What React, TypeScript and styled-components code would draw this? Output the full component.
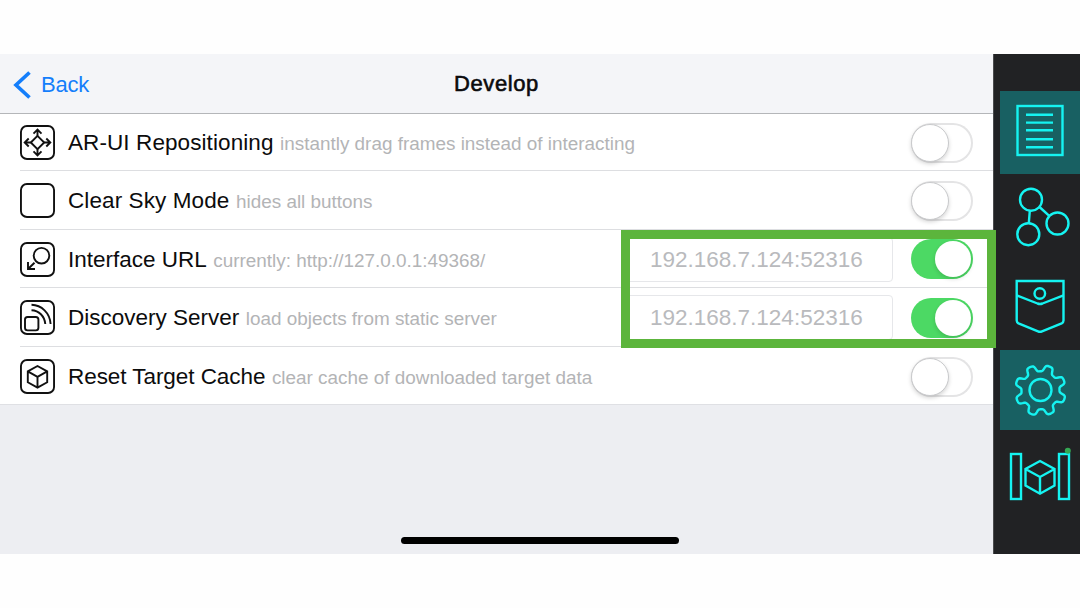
import React from "react";
import styled, { createGlobalStyle } from "styled-components";

const GlobalStyle = createGlobalStyle`
  * { box-sizing: border-box; }
  body { margin: 0; background: #fff; font-family: "Liberation Sans", Arial, sans-serif; }
`;

const Page = styled.div`
  width: 1080px;
  height: 608px;
  padding: 54px 0;
  background: #fefefe;
  overflow: hidden;
`;

const Device = styled.div`
  position: relative;
  display: flex;
  height: 500px;
`;

const Main = styled.main`
  display: flex;
  flex-direction: column;
  width: 993px;
  background: #edeef2;
`;

const Header = styled.header`
  display: grid;
  grid-template-columns: 200px 1fr 200px;
  align-items: center;
  height: 59.5px;
  padding-left: 13px;
  padding-right: 13px;
  background: #f4f5f8;
  border-bottom: 1px solid #b4b6b9;
`;

const BackButton = styled.button`
  display: flex;
  align-items: center;
  gap: 9px;
  padding: 3px 0 0;
  border: 0;
  background: none;
  color: #147efb;
  font: 22px "Liberation Sans", Arial, sans-serif;
  letter-spacing: -0.25px;
`;

const Title = styled.h1`
  margin: 0;
  padding-top: 2px;
  text-align: center;
  font-size: 22px;
  font-weight: 400;
  letter-spacing: 0.6px;
  color: #0b0b0c;
  -webkit-text-stroke: 0.6px #0b0b0c;
`;

const List = styled.ul`
  margin: 0;
  padding: 0 0 0 20px;
  list-style: none;
  background: #fff;
  border-bottom: 1px solid #dfe0e4;
`;

const Row = styled.li`
  display: flex;
  align-items: center;
  height: 58.6px;
  padding-top: 2px;
  padding-right: 20px;
  &:not(:last-child) { border-bottom: 1px solid #dddee1; }
  &:first-child { height: 57.5px; }
  &:last-child { height: 57.6px; }
`;

const RowIcon = styled.svg`
  flex: none;
  width: 35px;
  height: 35px;
  margin-right: 13px;
  fill: none;
  stroke: #111;
  stroke-width: 1.9;
`;

const Label = styled.span<{ $spacing: number }>`
  padding-top: 1px;
  white-space: nowrap;
  font-size: 22.5px;
  letter-spacing: ${(p) => p.$spacing}px;
  color: #0c0c0d;
`;

const Hint = styled.span`
  flex: 1;
  margin-left: 6.5px;
  padding-top: 3px;
  white-space: nowrap;
  font-size: 18.9px;
  color: #b3b4b6;
`;

const UrlField = styled.div`
  width: 268px;
  height: 45px;
  margin-right: 18px;
  padding-left: 24px;
  border: 1px solid #e6e7ea;
  border-radius: 4px;
  font-size: 22.5px;
  line-height: 43px;
  color: #b9babd;
`;

const Track = styled.div<{ $on: boolean }>`
  flex: none;
  display: flex;
  align-items: center;
  justify-content: ${(p) => (p.$on ? "flex-end" : "flex-start")};
  width: 62px;
  height: 40px;
  padding: ${(p) => (p.$on ? "0 2px" : "0")};
  border-radius: 20px;
  background: ${(p) => (p.$on ? "#4cd964" : "#fff")};
  box-shadow: ${(p) => (p.$on ? "none" : "inset 0 0 0 2px #e4e4e5")};
`;

const Knob = styled.div<{ $on: boolean }>`
  width: ${(p) => (p.$on ? 36 : 38)}px;
  height: ${(p) => (p.$on ? 36 : 38)}px;
  border-radius: 50%;
  background: #fff;
  border: ${(p) => (p.$on ? "0" : "1px solid #c9cacc")};
  box-shadow: 0 2px 4px rgba(0, 0, 0, ${(p) => (p.$on ? 0.14 : 0.17)});
`;

const Sidebar = styled.nav`
  display: flex;
  flex-direction: column;
  width: 87px;
  padding: 37px 0 0 7px;
  background: #212224;
  box-shadow: inset 1px 0 0 #4b4c4e;
`;

const Tab = styled.div<{ $height: number; $active?: boolean }>`
  height: ${(p) => p.$height}px;
  background: ${(p) => (p.$active ? "#186062" : "transparent")};
`;

const TabIcon = styled.svg`
  display: block;
  width: 80px;
  height: 100%;
  fill: none;
  stroke: #15f3f1;
  stroke-width: 2.4;
`;

const Highlight = styled.div`
  position: absolute;
  left: 621px;
  top: 176px;
  width: 375px;
  height: 118px;
  border: 9px solid #5cb53c;
`;

const HomeIndicator = styled.div`
  position: absolute;
  left: 401px;
  top: 483px;
  width: 278px;
  height: 7px;
  border-radius: 4px;
  background: #000;
`;

const Frame = () => <rect x="0.95" y="0.95" width="33.1" height="33.1" rx="6" />;

const icons = {
  move: (
    <>
      <path d="M17.5 10.8 24.2 17.5 17.5 24.2 10.8 17.5Z" />
      <path d="M17.5 10.8V5.2M13.5 8.7l4-4 4 4M17.5 24.2v5.6M13.5 26.3l4 4 4-4M10.8 17.5H5.2M8.7 13.5l-4 4 4 4M24.2 17.5h5.6M26.3 13.5l4 4-4 4" />
    </>
  ),
  blank: null,
  link: (
    <>
      <circle cx="21.5" cy="13.7" r="7.8" />
      <path d="M14.5 20.7 8 27M8 20v7h7" />
    </>
  ),
  signal: (
    <>
      <rect x="5" y="17" width="13.4" height="13.4" rx="2.6" />
      <path d="M11.500 10.3C19 10.6 24.5 16 25.3 24M11.500 4.8C21.5 5 30 13 30.6 24" />
    </>
  ),
  cube: (
    <path d="M17.5 7 27.2 12.3V23.3L17.5 28.7 7.8 23.3V12.3ZM7.8 12.3l9.7 5.5 9.7-5.5M17.5 17.8v10.9" />
  ),
};

interface Setting {
  icon: keyof typeof icons;
  label: string;
  labelSpacing: number;
  hint: string;
  url?: string;
  on: boolean;
}

const settings: Setting[] = [
  { icon: "move", label: "AR-UI Repositioning", labelSpacing: 0.09, hint: "instantly drag frames instead of interacting", on: false },
  { icon: "blank", label: "Clear Sky Mode", labelSpacing: 0.1, hint: "hides all buttons", on: false },
  { icon: "link", label: "Interface URL", labelSpacing: 0, hint: "currently: http://127.0.0.1:49368/", on: true, url: "192.168.7.124:52316" },
  { icon: "signal", label: "Discovery Server", labelSpacing: 0, hint: "load objects from static server", on: true, url: "192.168.7.124:52316" },
  { icon: "cube", label: "Reset Target Cache", labelSpacing: -0.06, hint: "clear cache of downloaded target data", on: false },
];

const Toggle = ({ on }: { on: boolean }) => (
  <Track $on={on} role="switch" aria-checked={on}>
    <Knob $on={on} />
  </Track>
);

// Eight-toothed outline: the radius alternates between tooth tips and valleys.
const gearPath = (cx: number, cy: number) => {
  const points: string[] = [];
  for (let i = 0; i <= 192; i++) {
    const a = (i / 192) * Math.PI * 2;
    const wave = Math.tanh(2.2 * Math.cos(8 * (a - Math.PI / 8 + 0.03))) / Math.tanh(2.2);
    const r = 22.2 + 3.2 * wave;
    points.push(`${(cx + r * Math.cos(a)).toFixed(2)} ${(cy + r * Math.sin(a)).toFixed(2)}`);
  }
  return `M${points.join("L")}Z`;
};

export default function App() {
  return (
    <>
      <GlobalStyle />
      <Page>
        <Device>
          <Main>
            <Header>
              <BackButton>
                <svg width="19" height="28" viewBox="0 0 19 28" fill="none" stroke="#147efb" strokeWidth="3.7">
                  <path d="M16.5 1.5 3 14l13.5 12.5" />
                </svg>
                Back
              </BackButton>
              <Title>Develop</Title>
            </Header>
            <List>
              {settings.map((s) => (
                <Row key={s.label}>
                  <RowIcon viewBox="0 0 35 35">
                    <Frame />
                    {icons[s.icon]}
                  </RowIcon>
                  <Label $spacing={s.labelSpacing}>{s.label}</Label>
                  <Hint>{s.hint}</Hint>
                  {s.url && <UrlField>{s.url}</UrlField>}
                  <Toggle on={s.on} />
                </Row>
              ))}
            </List>
          </Main>
          <Sidebar>
            <Tab $height={83} $active>
              <TabIcon viewBox="0 0 80 83">
                <rect x="17.5" y="15" width="45" height="49" />
                <path d="M26 23.8h27M26 31.6h27M26 39.3h27M26 48.2h27M26 56.3h27" />
              </TabIcon>
            </Tab>
            <Tab $height={88}>
              <TabIcon viewBox="0 0 80 88">
                <circle cx="31" cy="25.7" r="11" />
                <circle cx="57.5" cy="49.5" r="11" />
                <circle cx="28.3" cy="60.2" r="11" />
                <path d="M39.5 33 49.5 42.2M29.8 36.8 28.8 49.2" />
              </TabIcon>
            </Tab>
            <Tab $height={88}>
              <TabIcon viewBox="0 0 80 88">
                <path d="M16.7 19h46.8v39.5q0 2-1.8 2.800L42 69.300q-2 .9-4 0L18.500 61.300Q16.700 60.500 16.700 58.500Z" />
                <path d="M16.700 33.300 37.500 41.500q2.500.9 5 0L63.500 33.300" />
                <circle cx="39.800" cy="31.500" r="5.300" />
              </TabIcon>
            </Tab>
            <Tab $height={80} $active>
              <TabIcon viewBox="0 0 80 80">
                <path d={gearPath(40.5, 40.3)} />
                <circle cx="40.5" cy="40" r="11" />
              </TabIcon>
            </Tab>
            <Tab $height={90}>
              <TabIcon viewBox="0 0 80 90">
                <rect x="11" y="24" width="10" height="45" />
                <rect x="59" y="24" width="10" height="45" />
                <path d="M40 31 54.5 39V55.5L40 63.7 25.5 55.5V39ZM25.5 39 40 47l14.5-8M40 47v16.7" />
                <circle cx="67.8" cy="20.8" r="3" fill="#34a853" stroke="none" />
              </TabIcon>
            </Tab>
          </Sidebar>
          <Highlight />
          <HomeIndicator />
        </Device>
      </Page>
    </>
  );
}
